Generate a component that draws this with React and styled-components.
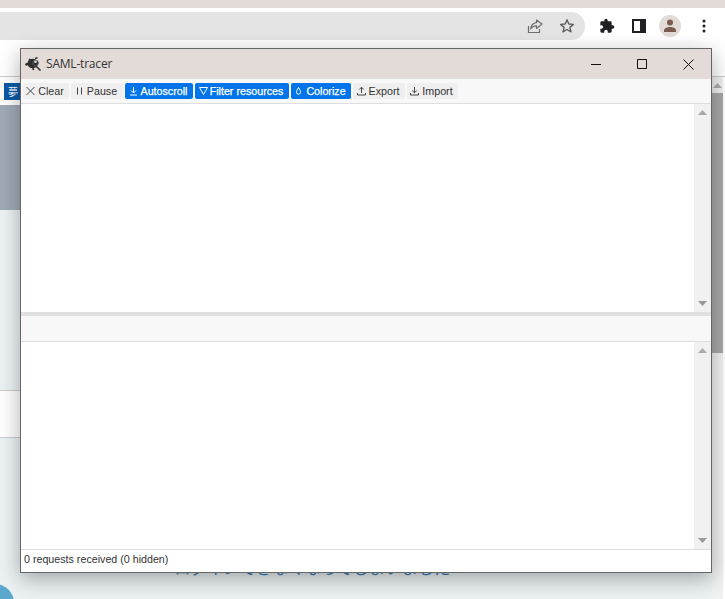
import React from "react";
import styled, { createGlobalStyle } from "styled-components";

const Global = createGlobalStyle`
  html, body { margin: 0; padding: 0; background: #fff; overflow: hidden; }
  * { box-sizing: border-box; }
`;

const Page = styled.div`
  position: relative; width: 725px; height: 599px; overflow: hidden;
  display: flex; flex-direction: column; background: #fff;
`;
const TopStrip = styled.div`height: 8px; background: #e3dbd8; flex: none;`;
const BrowserBar = styled.div`
  height: 68px; flex: none; display: flex; align-items: flex-start; padding-top: 4px; background: #fff;
`;
const Omnibox = styled.div`
  width: 585px; height: 28px; background: #e4e4e4; border-radius: 0 14px 14px 0;
  display: flex; align-items: center; justify-content: flex-end; gap: 16px; padding-right: 10px; flex: none;
`;
const Tools = styled.div`
  display: flex; align-items: center; height: 28px; margin-left: 6px;
`;
const ToolSlot = styled.div`
  width: ${p => p.$w}px; display: flex; align-items: center; justify-content: center; flex: none;
`;
const Avatar = styled.div`
  width: 22px; height: 22px; border-radius: 50%; background: #e3dbd8;
  display: flex; align-items: center; justify-content: center;
`;
const Body = styled.div`flex: 1; display: flex; min-height: 0; border-top: 1px solid #ccc;`;
const Content = styled.div`flex: 1; display: flex; flex-direction: column; min-width: 0;`;
const NavRow = styled.div`height: 28px; flex: none; padding: 6px 0 0 4px; background: #fff;`;
const NavTab = styled.div`
  width: 40px; height: 17px; background: #0a5aa8; color: #fff;
  font: 10px "Noto Sans CJK JP", sans-serif; line-height: 17px; padding-left: 4px;
`;
const Hero = styled.div`height: 105px; flex: none; background: #a0abb7;`;
const Band = styled.div`height: 180px; flex: none; background: #ecf2f4;`;
const WhiteBand = styled.div`
  height: 48px; flex: none; background: #fff; border-top: 1px solid #ccc; border-bottom: 1px solid #ccc;
`;
const Lower = styled.div`
  flex: 1; position: relative; background: #ecf2f4; padding: 117px 0 0 158px; overflow: hidden;
`;
const LowerText = styled.div`
  font: 16.3px/24px "Noto Sans CJK JP", sans-serif; color: #3b7fb8; white-space: nowrap;
`;
const Corner = styled.div`
  position: absolute; left: -24px; bottom: -23px; width: 38px; height: 38px; border-radius: 50%; background: #5aa9cd;
`;
const PageScroll = styled.div`
  width: 13px; flex: none; border-right: 2px solid #fff; background: #f1f1f1;
  display: flex; flex-direction: column; align-items: stretch;
`;
const PageArrow = styled.div`height: 16px; flex: none; display: flex; align-items: center; justify-content: center;`;
const PageThumb = styled.div`height: 260px; flex: none; background: #a8a8a8;`;

const Win = styled.div`
  position: absolute; left: 20px; top: 48px; width: 692px; height: 525px;
  border: 1px solid #666; background: #fff; display: flex; flex-direction: column;
  box-shadow: 0 6px 20px rgba(0,0,0,.32);
`;
const TitleBar = styled.div`
  height: 30px; flex: none; background: #e3dbd8; display: flex; align-items: center; padding-left: 4px;
`;
const Title = styled.div`
  font: 12px/14px "Open Sans", sans-serif; color: #333; margin: 0 0 0 4px; flex: 1; letter-spacing: -.2px;
`;
const WinBtn = styled.div`
  width: 46px; height: 30px; display: flex; align-items: center; justify-content: center; flex: none;
`;
const Toolbar = styled.div`
  height: 25px; flex: none; background: #f8f8f8; border-bottom: 1px solid #ddd;
  display: flex; align-items: flex-start; gap: 2px; padding: 4px 0 0 2px;
`;
const ToolButton = styled.div`
  height: 16px; width: ${p => p.$w}px; border-radius: 2px; flex: none; padding-right: 2px;
  background: ${p => (p.$on ? "#0074e8" : "#efefef")};
  color: ${p => (p.$on ? "#fff" : "#333")};
  font: 10.7px/16px "Liberation Sans", sans-serif;
  ${p => p.$on && "-webkit-text-stroke: .25px #fff;"}
  display: flex; align-items: center; justify-content: center; gap: ${p => p.$gap ?? 3}px; white-space: nowrap;
`;
const Pane = styled.div`flex: none; height: ${p => p.$h}px; display: flex; justify-content: flex-end;`;
const PaneScroll = styled.div`
  width: 17px; background: #f1f1f1; display: flex; flex-direction: column;
  justify-content: space-between; align-items: center; padding: 6px 0;
`;
const Divider = styled.div`height: 4px; flex: none; background: #e0e0e0;`;
const Section = styled.div`height: 26px; flex: none; background: #f8f8f8; border-bottom: 1px solid #ddd;`;
const Status = styled.div`
  flex: 1; border-top: 1px solid #ddd; background: #fff; padding-left: 3px;
  font: 10.7px/19px "Liberation Sans", sans-serif; color: #333;
`;

const Up = ({ c = "#aaa" }) => <svg width="9" height="5" viewBox="0 0 9 5"><path d="M4.5 0 9 5H0z" fill={c} /></svg>;
const Down = ({ c = "#999" }) => <svg width="9" height="5" viewBox="0 0 9 5"><path d="M0 0h9L4.5 5z" fill={c} /></svg>;

const Ic = ({ c, children }) => (
  <svg width="9" height="10" viewBox="0 0 9 10" fill="none" stroke={c} strokeWidth="1" style={{ flex: "none" }}>{children}</svg>
);

const Spider = () => (
  <svg width="17" height="15" viewBox="0 0 17 15">
    <ellipse cx="7.5" cy="6.5" rx="5" ry="4.8" fill="#2f2f2f" />
    <path d="M1 7.500 4 6M4 2 6 4M10 1.500 12.500.800M11 9l4.500 4.500M8 11l.5 2" stroke="#2f2f2f" strokeWidth="1.6" fill="none" />
    <circle cx="1.5" cy="7.500" r="1.300" fill="#2f2f2f" />
    <circle cx="10.500" cy="6" r="2.800" fill="#2f2f2f" stroke="#555" strokeWidth="1" />
    <circle cx="10.500" cy="4.800" r="1.300" fill="#e3dbd8" />
  </svg>
);

export default function App() {
  return (
    <Page>
      <Global />
      <TopStrip />
      <BrowserBar>
        <Omnibox>
          <svg width="16" height="16" viewBox="0 0 16 16" fill="none" stroke="#6f6f6f" strokeWidth="1.2">
            <path d="M1.500 8v6.500h11V11" />
            <path d="M9.500 2v2.600C5.500 5 4 7.500 3.600 11c1.400-2.400 3.200-3.300 5.900-3.200v2.700L15 6z" strokeLinejoin="round" />
          </svg>
          <svg width="16" height="16" viewBox="0 0 16 16" fill="none" stroke="#5f5f5f" strokeWidth="1.4">
            <path d="M8 1.800 9.800 6l4.600.400-3.500 3 1.100 4.500L8 11.500l-4 2.400 1.100-4.500-3.500-3L6.200 6z" strokeLinejoin="round" />
          </svg>
        </Omnibox>
        <Tools>
          <ToolSlot $w={32}>
            <svg width="16" height="16" viewBox="0 0 24 24" fill="#202124">
              <path d="M20.500 11H19V7a2 2 0 0 0-2-2h-4V3.500a2.500 2.500 0 0 0-5 0V5H4a2 2 0 0 0-2 2v3.800h1.500a2.700 2.700 0 0 1 0 5.400H2V20a2 2 0 0 0 2 2h3.800v-1.500a2.700 2.700 0 0 1 5.400 0V22H17a2 2 0 0 0 2-2v-4h1.500a2.500 2.500 0 0 0 0-5z" />
            </svg>
          </ToolSlot>
          <ToolSlot $w={32}>
            <svg width="14" height="14" viewBox="0 0 14 14">
              <path d="M0 0h14v14H0z" fill="#202124" />
              <path d="M2 2h6v10H2z" fill="#fff" />
            </svg>
          </ToolSlot>
          <ToolSlot $w={30}>
            <Avatar>
              <svg width="14" height="14" viewBox="0 0 14 14" fill="#7a5b4c">
                <circle cx="7" cy="3.500" r="3" />
                <path d="M1 13v-1.500C1 9.500 4 8 7 8s6 1.500 6 3.500V13z" />
              </svg>
            </Avatar>
          </ToolSlot>
          <ToolSlot $w={38}>
            <svg width="4" height="14" viewBox="0 0 4 14" fill="#202124">
              <circle cx="2" cy="2" r="1.500" /><circle cx="2" cy="7" r="1.500" /><circle cx="2" cy="12" r="1.500" />
            </svg>
          </ToolSlot>
        </Tools>
      </BrowserBar>
      <Body>
        <Content>
          <NavRow><NavTab>夢</NavTab></NavRow>
          <Hero />
          <Band />
          <WhiteBand />
          <Lower>
            <LowerText>・ログインできなくなってしまいました</LowerText>
            <Corner />
          </Lower>
        </Content>
        <PageScroll>
          <PageArrow><Up /></PageArrow>
          <PageThumb />
        </PageScroll>
      </Body>

      <Win>
        <TitleBar>
          <Spider />
          <Title>SAML-tracer</Title>
          <WinBtn>
            <svg width="10" height="10" viewBox="0 0 10 10"><path d="M0 5.500h10" stroke="#111" /></svg>
          </WinBtn>
          <WinBtn>
            <svg width="10" height="10" viewBox="0 0 10 10"><path d="M.5.500h9v9h-9z" stroke="#111" fill="none" /></svg>
          </WinBtn>
          <WinBtn>
            <svg width="11" height="11" viewBox="0 0 11 11"><path d="M.5.500l10 10M10.500.500l-10 10" stroke="#111" fill="none" /></svg>
          </WinBtn>
        </TitleBar>
        <Toolbar>
          <ToolButton $w={46}>
            <Ic c="#444"><path d="M.5 1l8 8M8.500 1l-8 8" /></Ic>Clear
          </ToolButton>
          <ToolButton $w={52}>
            <Ic c="#444"><path d="M2.500 1.500v7M6.500 1.500v7" /></Ic>Pause
          </ToolButton>
          <ToolButton $on $w={68}>
            <Ic c="#fff"><path d="M4.500 1v5.500M2 4.500l2.500 2.500L7 4.500M1 9h7" /></Ic>Autoscroll
          </ToolButton>
          <ToolButton $on $w={94} $gap={2}>
            <Ic c="#fff"><path d="M.5 1.500h8L4.500 8.500z" /></Ic>Filter resources
          </ToolButton>
          <ToolButton $on $w={60}>
            <Ic c="#fff"><path d="M4.500 1.500C3 4 2.500 5 2.500 6.200a2 2 0 0 0 4 0C6.500 5 6 4 4.500 1.500z" /></Ic>Colorize
          </ToolButton>
          <ToolButton $w={52}>
            <Ic c="#444"><path d="M4.500 7V1.500M2.200 3.500 4.500 1.200l2.300 2.300M.5 7v2h8V7" /></Ic>Export
          </ToolButton>
          <ToolButton $w={51}>
            <Ic c="#444"><path d="M4.500 1v5.500M2.200 4.500l2.300 2.300 2.300-2.300M.5 7v2h8V7" /></Ic>Import
          </ToolButton>
        </Toolbar>
        <Pane $h={208}>
          <PaneScroll><Up /><Down /></PaneScroll>
        </Pane>
        <Divider />
        <Section />
        <Pane $h={207}>
          <PaneScroll><Up /><Down /></PaneScroll>
        </Pane>
        <Status>0 requests received (0 hidden)</Status>
      </Win>
    </Page>
  );
}
